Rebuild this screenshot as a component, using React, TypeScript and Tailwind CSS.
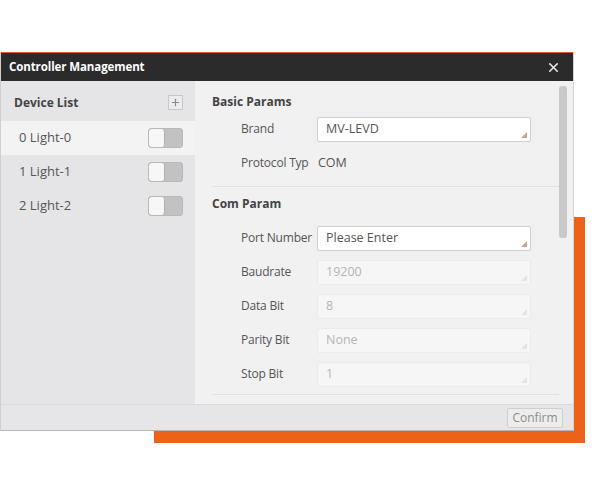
import { X, Plus } from 'lucide-react';

const devices = ['Light-0', 'Light-1', 'Light-2'];

function Toggle() {
  return (
    <div className="flex h-[20px] w-[35px] rounded-[3px] border border-[#b9b9b9] bg-[#c2c2c2] overflow-hidden">
      <div className="h-full w-[16px] rounded-[3px] bg-[#f7f7f7] border-r border-[#b0b0b0]" />
    </div>
  );
}

function Field({ label, value, enabled }: { label: string; value: string; enabled?: boolean }) {
  return (
    <div className="flex h-[34px] items-center pl-[29px]">
      <span className="w-[76px] whitespace-nowrap text-[12px] tracking-[-0.2px] text-[#555]">{label}</span>
      <div
        className={`relative flex h-[25px] w-[214px] items-center rounded-[2px] border px-[8px] text-[12.5px] ${
          enabled ? 'border-[#cfcfcf] bg-white text-[#555]' : 'border-[#ebebeb] bg-[#f6f6f7] text-[#b5b5b5]'
        }`}
      >
        {value}
        <svg className="absolute bottom-[3px] right-[3px]" width="6" height="6" viewBox="0 0 6 6">
          <path d="M6 0 L6 6 L0 6 Z" fill={enabled ? '#c8a48a' : '#e3e3e3'} />
        </svg>
      </div>
    </div>
  );
}

export default function App() {
  return (
    <div className="relative h-[494px] w-[600px] overflow-hidden bg-white font-['Open_Sans',sans-serif]">
      {/* orange backdrop */}
      <div className="absolute left-[154px] top-[217px] h-[226px] w-[431px] bg-[#ec6218]" />

      {/* Window */}
      <div className="relative mt-[52px] flex h-[379px] w-[574px] flex-col border-b border-[#b5b5b5] border-l border-r border-l-[#cfcfcf] border-r-[#d4d4d4] bg-[#f1f1f2]">
        <div className="flex h-[29px] items-center justify-between border-t border-[#e2592a] bg-[#2b2b2b] pl-[8px] pr-[12px]">
          <span className="text-[11.5px] font-bold tracking-[-0.1px] text-white">Controller Management</span>
          <X size={15} strokeWidth={2.5} className="text-[#e8e8e8]" />
        </div>

        <div className="flex flex-1 overflow-hidden">
          {/* Device list */}
          <div className="w-[194px] bg-[#e5e5e7]">
            <div className="flex h-[40px] items-center justify-between pl-[13px] pr-[12px] pt-[3px]">
              <span className="text-[12px] font-bold text-[#444]">Device List</span>
              <div className="flex h-[15px] w-[15px] items-center justify-center border border-[#c8c8c8] bg-[#ececee]">
                <Plus size={11} strokeWidth={2.5} className="text-[#8a8a8a]" />
              </div>
            </div>
            {devices.map((d, i) => (
              <div
                key={d}
                className={`flex h-[34px] items-center justify-between pl-[18px] pr-[12px] ${i === 0 ? 'bg-[#f3f3f4]' : ''}`}
              >
                <span className="text-[13px] text-[#555]">
                  {i} {d}
                </span>
                <Toggle />
              </div>
            ))}
          </div>

          {/* Params */}
          <div className="flex flex-1 overflow-hidden">
            <div className="flex-1 pl-[17px]">
              <div className="border-b border-[#e1e1e3] pb-[6px]">
                <div className="h-[31px] pt-[12px] text-[12px] font-bold text-[#444]">Basic Params</div>
                <Field label="Brand" value="MV-LEVD" enabled />
                <div className="flex h-[34px] items-center pl-[29px] text-[12px] tracking-[-0.2px] text-[#555]">
                  <span className="w-[76px] whitespace-nowrap">Protocol Typ</span>
                  <span className="pl-[1px] text-[12.5px] tracking-normal">COM</span>
                </div>
              </div>
              <div className="border-b border-[#e1e1e3] pb-[3px]">
                <div className="h-[34px] pt-[8px] text-[12px] font-bold text-[#444]">Com Param</div>
                <Field label="Port Number" value="Please Enter" enabled />
                <Field label="Baudrate" value="19200" />
                <Field label="Data Bit" value="8" />
                <Field label="Parity Bit" value="None" />
                <Field label="Stop Bit" value="1" />
              </div>
            </div>
            <div className="w-[14px] pt-[5px]">
              <div className="h-[152px] w-[8px] rounded-[3px] bg-[#c9c9c9]" />
            </div>
          </div>
        </div>

        <div className="flex h-[26px] items-center justify-end border-t border-[#d9d9db] bg-[#e6e6e8] pr-[10px]">
          <div className="flex h-[20px] w-[56px] items-center justify-center rounded-[2px] border border-[#cfcfcf] bg-[#ededee] text-[12px] text-[#8c8c8c]">
            Confirm
          </div>
        </div>
      </div>
    </div>
  );
}
